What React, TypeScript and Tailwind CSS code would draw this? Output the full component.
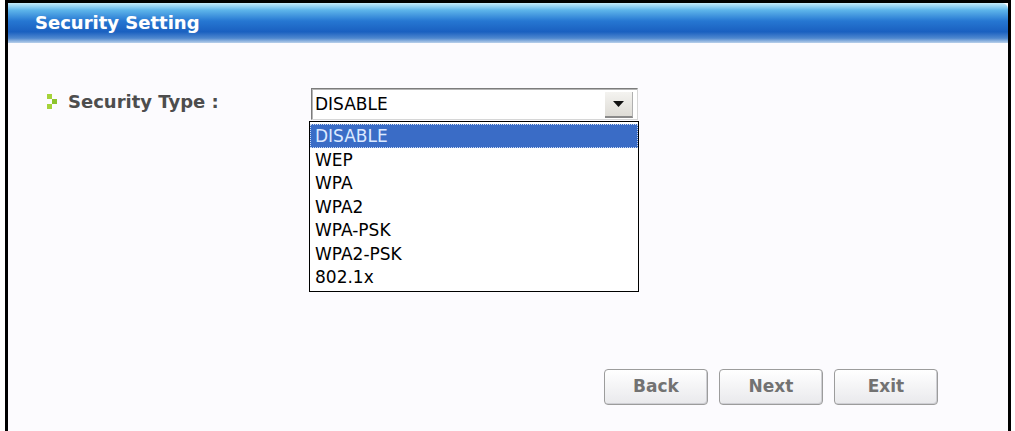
const options = ['DISABLE', 'WEP', 'WPA', 'WPA2', 'WPA-PSK', 'WPA2-PSK', '802.1x'];

const Bullet = () => (
  <svg width="11" height="15" viewBox="0 0 11 15" aria-hidden="true">
    <rect x="0" y="0" width="5" height="5" fill="#a6d33a" />
    <rect x="5" y="5" width="5" height="5" fill="#8cc42c" />
    <rect x="0" y="10" width="5" height="5" fill="#a6d33a" />
  </svg>
);

const Button = ({ label }: { label: string }) => (
  <button className="flex h-[36px] w-[104px] items-center justify-center rounded-[4px] border border-[#9c9c9c] bg-gradient-to-b from-white to-[#e9e9ec] text-[17px] font-bold text-[#727272] shadow-[inset_-1px_-1px_0_#cfcfd4]">
    {label}
  </button>
);

export default function App() {
  return (
    <div className="h-[431px] w-[1015px] bg-white font-['DejaVu_Sans',sans-serif]">
      <div className="ml-[5px] mr-[4px] flex h-full flex-col border-x-[3px] border-t-[3px] border-black bg-[#fcfbfe]">
        <header className="flex h-[40px] items-center rounded-tr-[6px] bg-[linear-gradient(to_bottom,#c4ecfb_0%,#5db4ea_18%,#2677d2_45%,#1a60c0_72%,#4f88cf_88%,#b9d0ea_100%)] pb-[2px] pl-[27px]">
          <h1 className="text-[18px] font-bold text-white [text-shadow:0_0_1px_#5b8fcf]">
            Security Setting
          </h1>
        </header>

        <div className="flex pl-[39px] pt-[45px]">
          <div className="flex h-[32px] w-[264px] items-center gap-[10px] pb-[5px]">
            <Bullet />
            <span className="text-[18px] font-bold text-[#4d4d4d]">Security Type :</span>
          </div>

          <div className="flex flex-col">
            <div className="flex h-[32px] w-[327px] items-center justify-between border border-b-[#d6d6d6] border-l-[#7c7c7c] border-r-[#d6d6d6] border-t-[#7c7c7c] bg-white pl-[3px] pr-[4px] pt-[2px] shadow-[inset_1px_1px_0_#b5b5b5]">
              <span className="text-[17px] text-black">DISABLE</span>
              <span className="flex h-[26px] w-[28px] items-center justify-center border-b-2 border-r border-b-[#8a8a8a] border-r-[#b0b0b0] bg-gradient-to-b from-[#f4f3f0] to-[#dedcd6]">
                <svg width="11" height="6" viewBox="0 0 11 6" aria-hidden="true">
                  <path d="M0 0h11L5.5 6z" fill="#111" />
                </svg>
              </span>
            </div>
            <ul className="-ml-[2px] mt-[1px] w-[330px] border border-black bg-white py-[2px]">
              {options.map((opt, i) => (
                <li
                  key={opt}
                  className={
                    i === 0
                      ? 'flex h-[23.5px] items-center border border-dotted border-[#c9d8f2] bg-[#3a6cc6] pl-[4px] pt-[2px] text-[17px] text-[#dce9ff]'
                      : 'flex h-[23.5px] items-center pl-[5px] pt-[2px] text-[17px] text-black'
                  }
                >
                  {opt}
                </li>
              ))}
            </ul>
          </div>
        </div>

        <div className="mb-[26px] mt-auto flex justify-end gap-[11px] pr-[70px]">
          <Button label="Back" />
          <Button label="Next" />
          <Button label="Exit" />
        </div>
      </div>
    </div>
  );
}
